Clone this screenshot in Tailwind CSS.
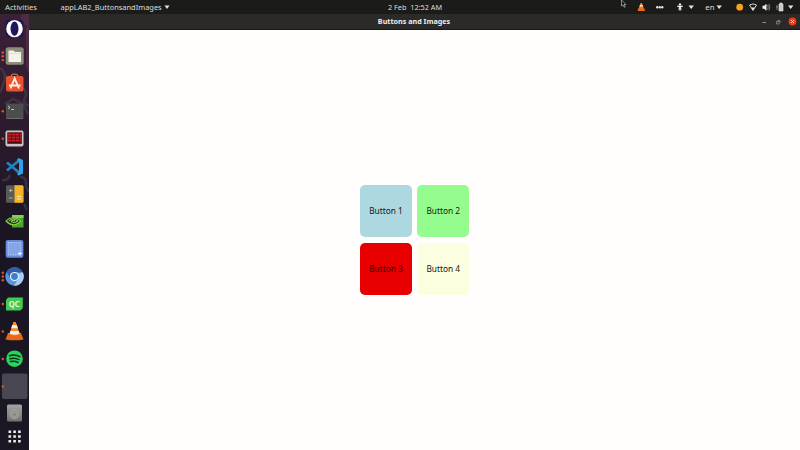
<!DOCTYPE html>
<html lang="en">
<head>
<meta charset="utf-8">
<title>Buttons and Images</title>
<script src="https://cdn.jsdelivr.net/npm/@tailwindcss/browser@4"></script>
</head>
<body class="w-[800px] h-[450px] overflow-hidden bg-[#fffefc] font-['Noto_Sans',sans-serif] flex flex-col">
<header class="h-[14px] shrink-0 bg-[#1b1c1a] text-[#dededc] text-[7.3px] leading-[14px] grid grid-cols-[360px_110px_330px] whitespace-nowrap">
  <div class="flex">
    <span class="w-[56px] pl-[5px] text-[7.700px]">Activities</span>
    <span class="pl-[4.500px] w-[104px] text-[7.450px]">appLAB2_ButtonsandImages</span>
    <svg class="w-[6px] h-[14px] ml-[4px]" viewBox="0 0 6 14"><path d="M.5 5.500h5L3 8.900z" fill="#e4e4e2"/></svg>
  </div>
  <div class="text-center whitespace-pre">2 Feb  12:52 AM</div>
  <svg class="w-[330px] h-[14px]" viewBox="470 0 330 14">
    <path d="M621.500 0v6l1.500-1.200 1.200 2.500 1-.5-1.200-2.300h2z" fill="#111" stroke="#d5d5d5" stroke-width=".6"/>
    <path d="M640.500 3h1.500l2 6h-5.500z" fill="#f07c22"/><path d="M640 5h2.600l.5 1.400h-3.600z" fill="#eee"/><path d="M638.300 8.500h6l.8 2.500h-7.600z" fill="#e96a1c"/>
    <g fill="#e5e5e3"><circle cx="657.200" cy="7.200" r="1.200"/><circle cx="659.700" cy="7.200" r="1.200"/><circle cx="662.200" cy="7.200" r="1.200"/>
    <circle cx="680" cy="4.500" r="1.200"/><path d="M677 5.700h6v1l-1.800.3.200 3.500h-1l-.4-2-.4 2h-1l.2-3.500-1.800-.3zM688.500 5.500h5.400l-2.700 3.400zM716.500 5.500h5.400l-2.700 3.400zM788 5.500h5.400l-2.700 3.400z"/></g>
    <text x="705.300" y="9.800" font-size="7.700" fill="#dededc">en</text>
    <circle cx="739.700" cy="7.200" r="3.400" fill="#f8a01f"/>
    <path d="M749.500 5q3.500-2.200 7 0L753 10.500z" fill="none" stroke="#e5e5e3" stroke-width=".9"/><path d="M751.300 7.500h3.400L753 10.500z" fill="#e5e5e3"/>
    <path d="M762.500 5.800h1.600l2.400-2v7l-2.400-2h-1.600z" fill="#eee"/><path d="M767.500 5q1.400 2.200 0 4.500M768.800 4q2 3.200 0 6.500" fill="none" stroke="#aaa" stroke-width=".7"/>
    <path d="M779 4h1V3h2v1h1v7h-4z" fill="#c8c8c5" stroke="#eee" stroke-width=".6"/><path d="M777 5v5M776 7h1.500" stroke="#aaa" stroke-width=".7"/>
  </svg>
</header>
<div class="flex h-[436px]">
  <aside class="w-[29px] shrink-0 bg-[#1d1825]">
    <svg class="w-[29px] h-[436px]" viewBox="0 14 29 436">
      <defs>
        <linearGradient id="wall" x2="0" y2="1"><stop stop-color="#3b2138"/><stop offset=".2" stop-color="#301d30"/><stop offset=".5" stop-color="#1b1522"/><stop offset="1" stop-color="#1a1723"/></linearGradient>
        <linearGradient id="disk" x2="0" y2="1"><stop stop-color="#a5a6a3"/><stop offset="1" stop-color="#70736f"/></linearGradient>
      </defs>
      <path d="M0 14h29v436H0z" fill="url(#wall)"/>
      <path d="M22 14q-5 8 7 13V14zM26 28v38l3 8V24z" fill="#593248" opacity=".65"/>
      <path d="M0 68q7 5 4 14t-4 10M23 88q5 5 2 10t4 8M5 104l8-5 10 5 5 10M2 180q6 1 8-5M20 177q7-1 6 10l3 5M24 204l3 6" fill="none" stroke="#51505a" stroke-width="2.500" opacity=".45"/>
      <rect x="5.500" y="19.500" width="18" height="18" rx="4" fill="#20145a"/><ellipse cx="14.500" cy="28.700" rx="8.300" ry="8.600" fill="#fff"/><ellipse cx="14.500" cy="28.700" rx="4" ry="7.100" fill="#20145a"/>
      <rect x="5.700" y="47.300" width="18" height="17.500" rx="2.500" fill="#8d8c7d"/><path d="M8.500 50.500h5l1.500 1.500h6v10H8.500z" fill="#f4f3ea"/><path d="M8.500 53.500h12.500" stroke="#d5d4cb" stroke-width=".6"/>
      <path d="M11 77q0-3 3.500-3t3.500 3" fill="none" stroke="#bd8b7e" stroke-width="1.200"/><rect x="6" y="76" width="17.500" height="15.500" rx="2" fill="#e8532d"/><path d="M10.500 88.500l4.200-10 4.200 10M9 85.500h11.500" fill="none" stroke="#fff0e8" stroke-width="1.900"/>
      <rect x="6" y="103.500" width="17.500" height="15.500" rx="1.500" fill="#4b4e4c"/><path d="M6.500 118.500h16.500" stroke="#6b6d6c"/><path d="M8 106l2 1.500-2 1.500M11 109.500h3" fill="none" stroke="#ddd" stroke-width=".8"/>
      <rect x="5.500" y="130.500" width="18" height="16" rx="2" fill="#c7c5c3"/><rect x="7.300" y="132.300" width="14.500" height="11.500" fill="#430d15"/><path d="M8 134.500h13M8 137.500h13M8 140.500h13" stroke="#ce1f29" stroke-width="2.200" stroke-dasharray="3.500 .5"/>
      <path d="M7 162.500l12 10M7 170.500l12-10" stroke="#2084c4" stroke-width="2.700"/><path d="M18.500 158l4.500 2v13.500l-4.500 2-1.500-1.200 2-3v-9l-2-2.500z" fill="#34a0e8"/>
      <rect x="6" y="185.300" width="17.500" height="17.500" rx="1.500" fill="#5a5a57"/><path d="M14.500 185.300H22q1.500 0 1.500 1.500v14.500q0 1.500-1.500 1.500h-7.500z" fill="#f3b32b"/><path d="M9 190.500h3.500M10.700 188.700v3.600M9 198h3.500" stroke="#c4c4c0" stroke-width=".8"/><path d="M17 196.500h4M17 199h4" stroke="#fff0ca" stroke-width=".9"/>
      <path d="M12 215h11.500v12.500H12z" fill="#45a62b"/><path d="M12 215h11.500v3H12z" fill="#83ce54"/><path d="M6 221q6-6.500 15 0-8 7.500-15 0z" fill="#173b18" stroke="#86cb47" stroke-width="1.100"/><path d="M9 221q4-4 9 0-4 3-7 .5l2-1.500 2 1" fill="none" stroke="#a3dd67" stroke-width="1"/>
      <rect x="5.700" y="240" width="17.700" height="17.700" rx="2" fill="#648bdc"/><rect x="8" y="242.500" width="13" height="12.500" fill="#84a5e8" stroke="#d8e6ff" stroke-width=".7" stroke-dasharray="1.500 1"/><path d="M20 251.500v4M18 253.500h4" stroke="#fff" stroke-width=".9"/>
      <circle cx="14.500" cy="276.500" r="9.200" fill="#5c93db"/><path d="M6.500 272A9.200 9.200 0 0 1 22.700 272.300H14.500L10.800 279z" fill="#315faa"/><path d="M22.700 272.300A9.200 9.200 0 0 1 14 285.700l4.400-7.200-.2-4.500z" fill="#a8cef6"/><circle cx="14.500" cy="276.500" r="4.600" fill="#edf6ff"/><circle cx="14.500" cy="276.500" r="3.400" fill="#437fc9"/>
      <path d="M8 297.500h14.800v10.500l-2.500 2.500H6V300z" fill="#45ca50"/><text x="14.300" y="307" text-anchor="middle" font-size="8.500" font-weight="600" textLength="11" lengthAdjust="spacingAndGlyphs" fill="#eaffea">QC</text>
      <path d="M8 333h13l2.500 6.500q-9 1.700-18 0z" fill="#e8681a"/><path d="M13.300 322h2.500l4 12q-5 3-10.300 0z" fill="#f58b26"/><path d="M12.300 325h4.500l1 3.200h-6.600zM10.300 331h8.500l.8 2.700q-5 2.200-10 0z" fill="#f3eee6"/>
      <circle cx="14.500" cy="358.700" r="8.300" fill="#27d45e"/><path d="M9.500 355.700q5.500-1.700 10.500 1M10 358.800q4.700-1.400 9 .9M10.500 361.600q4-1 7.500.8" fill="none" stroke="#122b1c" stroke-width="1.500" stroke-linecap="round"/>
      <rect x="2" y="373.500" width="25.500" height="25.500" rx="2" fill="#484752"/>
      <rect x="7" y="404.500" width="15" height="17" rx="1.500" fill="url(#disk)"/><circle cx="14.500" cy="414.500" r="4.300" fill="#92948f" stroke="#aaa" stroke-width=".8"/><circle cx="14.500" cy="414.500" r="1.700" fill="#777" stroke="#bbb" stroke-width=".5"/>
      <path d="M8.500 431.700h12.500M8.500 436.500h12.500M8.500 441.300h12.500" stroke="#efeff0" stroke-width="2.600" stroke-dasharray="2.600 2.200"/>
      <g fill="#e9512a"><circle cx="2.800" cy="52.500" r="1.200"/><circle cx="2.800" cy="56.300" r="1.200"/><circle cx="2.800" cy="60.100" r="1.200"/><circle cx="2.800" cy="111.200" r="1.200"/><circle cx="2.800" cy="138.700" r="1.200"/><circle cx="2.800" cy="272.700" r="1.200"/><circle cx="2.800" cy="276.500" r="1.200"/><circle cx="2.800" cy="280.300" r="1.200"/><circle cx="2.800" cy="304" r="1.200"/><circle cx="2.800" cy="331.500" r="1.200"/><circle cx="2.800" cy="359" r="1.200"/><circle cx="2.800" cy="386.500" r="1.200"/></g>
    </svg>
  </aside>
  <section class="flex-1 flex flex-col">
    <div class="h-[15.500px] shrink-0 bg-[#2b2a28] border-b border-[#181816] grid grid-cols-[330px_110px_331px] leading-[15px] text-[7.2px]">
      <span></span>
      <h1 class="text-center font-bold text-[#f0f0ed] whitespace-nowrap">Buttons and Images</h1>
      <svg class="w-[331px] h-[15px]" viewBox="469 14 331 15"><path d="M762.500 22.500h3.500" stroke="#aaa" stroke-width=".8"/><path d="M776.500 21.500h2.500V24h-2.500zM777.500 20.500h2.500V23" fill="none" stroke="#999" stroke-width=".7"/><circle cx="792.500" cy="21.500" r="3.900" fill="#e2421e"/><path d="M791 20l3 3M794 20l-3 3" stroke="#ffe5dc" stroke-width=".8"/></svg>
    </div>
    <main class="flex-1 pt-[155.700px] pl-[331px]">
      <div class="grid grid-cols-[52px_52px] auto-rows-[52px] gap-x-[5.200px] gap-y-[5.400px] text-[8.300px] text-[#151515]">
        <button class="pt-[1px] rounded-[5px] bg-[#add8df]">Button 1</button>
        <button class="pt-[1px] rounded-[5px] bg-[#95fd90]">Button 2</button>
        <button class="pt-[1px] rounded-[5px] bg-[#e80000] text-[#390000]">Button 3</button>
        <button class="pt-[1px] rounded-[5px] bg-[#fbffdf]">Button 4</button>
      </div>
    </main>
  </section>
</div>
</body>
</html>
